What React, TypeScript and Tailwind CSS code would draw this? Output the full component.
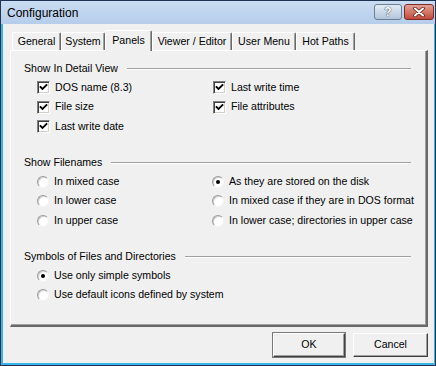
import React from 'react';

function CheckBox({ checked }: { checked?: boolean }) {
  return (
    <span className="w-[13px] h-[13px] shrink-0 bg-white border border-t-[#808080] border-l-[#808080] border-b-white border-r-white shadow-[inset_1px_1px_0_#404040,inset_-1px_-1px_0_#d4d0c8] flex items-center justify-center">
      {checked && (
        <svg width="9" height="9" viewBox="0 0 9 9">
          <polyline points="1.5,4 3.5,6 7.5,2" fill="none" stroke="#000" strokeWidth="1.8" strokeLinecap="square" />
        </svg>
      )}
    </span>
  );
}

function Radio({ checked }: { checked?: boolean }) {
  return (
    <span className="w-[12px] h-[12px] shrink-0 rounded-full bg-white border border-t-[#9a9a9a] border-l-[#9a9a9a] border-b-[#f4f4f4] border-r-[#f4f4f4] shadow-[inset_1px_1px_0_#d0d0d0] flex items-center justify-center">
      {checked && <span className="w-[4px] h-[4px] rounded-full bg-black" />}
    </span>
  );
}

function Heading({ children }: { children: React.ReactNode }) {
  return (
    <div className="flex items-center h-[14px] pr-[15px]">
      <span>{children}</span>
      <div className="ml-[9px] flex-1 border-t border-t-[#a0a0a0] border-b border-b-white" />
    </div>
  );
}

function Row({ children, control }: { children: React.ReactNode; control: React.ReactNode }) {
  return (
    <div className="flex items-center h-[19.5px] gap-[5px] whitespace-nowrap">
      {control}
      <span>{children}</span>
    </div>
  );
}

const tabs = [
  { label: 'General', w: 'w-[49px]' },
  { label: 'System', w: 'w-[44px]' },
  { label: 'Panels', w: 'w-[47px]', active: true },
  { label: 'Viewer / Editor', w: 'w-[80px]' },
  { label: 'User Menu', w: 'w-[64px]' },
  { label: 'Hot Paths', w: 'w-[59px]' },
];

export default function App() {
  return (
    <div className="w-[436px] h-[366px] flex flex-col bg-[#38b4e6] border border-[#1d3552] font-['Liberation_Sans',Arial,sans-serif] text-[10.6px] text-black overflow-hidden">
      {/* Title bar */}
      <div className="h-[23px] shrink-0 flex items-start justify-between pl-[6px] pr-[1px] bg-gradient-to-b from-[#c9dcf2] to-[#b6cdeb]">
        <span className="text-[12px] leading-[23px] pt-[1px]">Configuration</span>
        <div className="flex gap-[2px] mt-[3px]">
          <div className="w-[28px] h-[16px] rounded-[3px] border border-[#6d7f93] bg-gradient-to-b from-[#e4edf7] to-[#b3c5db] flex items-center justify-center">
            <span className="text-[12px] font-bold leading-none text-white [text-shadow:0_0_1px_#2c3c4e,0_0_1px_#2c3c4e]">?</span>
          </div>
          <div className="w-[30px] h-[16px] rounded-[3px] border border-[#7d2b24] bg-gradient-to-b from-[#e3a196] to-[#c0493a] flex items-center justify-center">
            <svg width="14" height="10" viewBox="0 0 14 10">
              <path d="M3 1.5 L11 8.5 M11 1.5 L3 8.5" stroke="#5a1f18" strokeWidth="3.6" strokeLinecap="round" />
              <path d="M3 1.5 L11 8.5 M11 1.5 L3 8.5" stroke="#fff" strokeWidth="2" strokeLinecap="round" />
            </svg>
          </div>
        </div>
      </div>

      {/* Body */}
      <div className="flex-1 ml-[2px] mr-[1px] mb-[2px] bg-[#f0f0f0] pt-[6px] pl-[7px] pr-[6px] flex flex-col">
        {/* Tabs */}
        <div className="relative z-10 flex items-end h-[20px] pl-[2px]">
          {tabs.map((t) =>
            t.active ? (
              <div
                key={t.label}
                className={`${t.w} h-[21px] -mb-[1px] bg-[#f0f0f0] rounded-t-[2px] border-t border-l border-white border-r border-r-[#696969] shadow-[inset_-1px_0_0_#a0a0a0] flex items-start justify-center pt-[2px]`}
              >
                {t.label}
              </div>
            ) : (
              <div
                key={t.label}
                className={`${t.w} h-[18px] rounded-t-[2px] border-t border-l border-white border-r border-r-[#696969] shadow-[inset_-1px_0_0_#a0a0a0] flex items-center justify-center`}
              >
                {t.label}
              </div>
            )
          )}
        </div>

        {/* Panel */}
        <div className="h-[277px] shrink-0 border-t border-l border-white border-r-2 border-b-2 border-r-[#696969] border-b-[#696969] shadow-[inset_-1px_-1px_0_#a0a0a0] pt-[11px] pl-[13px]">
          <Heading>Show In Detail View</Heading>
          <div className="flex pl-[13px] mt-[2px]">
            <div className="w-[176px]">
              <Row control={<CheckBox checked />}>DOS name (8.3)</Row>
              <Row control={<CheckBox checked />}>File size</Row>
              <Row control={<CheckBox checked />}>Last write date</Row>
            </div>
            <div>
              <Row control={<CheckBox checked />}>Last write time</Row>
              <Row control={<CheckBox checked />}>File attributes</Row>
            </div>
          </div>

          <div className="mt-[19.5px]">
            <Heading>Show Filenames</Heading>
          </div>
          <div className="flex pl-[13px] mt-[2px]">
            <div className="w-[175px]">
              <Row control={<Radio />}>In mixed case</Row>
              <Row control={<Radio />}>In lower case</Row>
              <Row control={<Radio />}>In upper case</Row>
            </div>
            <div>
              <Row control={<Radio checked />}>As they are stored on the disk</Row>
              <Row control={<Radio />}>In mixed case if they are in DOS format</Row>
              <Row control={<Radio />}>In lower case; directories in upper case</Row>
            </div>
          </div>

          <div className="mt-[19.5px]">
            <Heading>Symbols of Files and Directories</Heading>
          </div>
          <div className="pl-[13px] mt-[2px]">
            <Row control={<Radio checked />}>Use only simple symbols</Row>
            <Row control={<Radio />}>Use default icons defined by system</Row>
          </div>
        </div>

        {/* Buttons */}
        <div className="flex justify-end gap-[8px] mt-[6px]">
          <button className="w-[72px] h-[24px] border border-t-white border-l-white border-r-[#404040] border-b-[#404040] shadow-[inset_-1px_-1px_0_#a0a0a0,0_0_0_1px_#7a7a7a] bg-[#f0f0f0]">
            OK
          </button>
          <button className="w-[75px] h-[24px] border border-t-white border-l-white border-r-[#404040] border-b-[#404040] shadow-[inset_-1px_-1px_0_#a0a0a0] bg-[#f0f0f0]">
            Cancel
          </button>
        </div>
      </div>
    </div>
  );
}
